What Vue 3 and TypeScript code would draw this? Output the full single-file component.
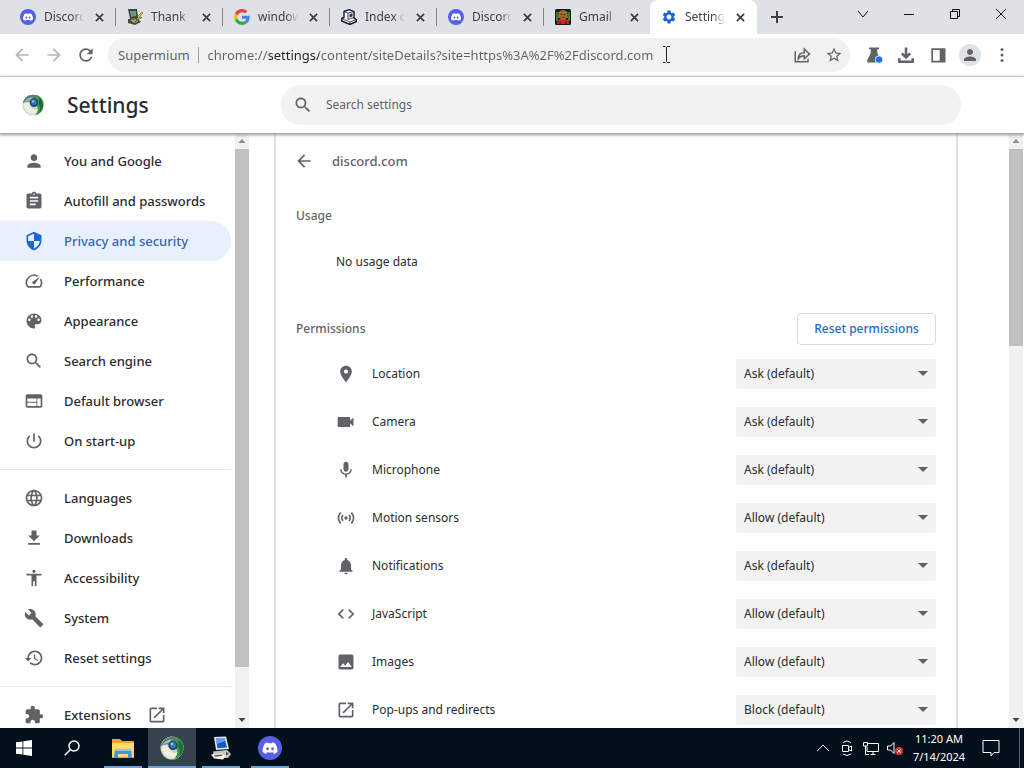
<script setup lang="ts">
import { ref } from 'vue'

interface Tab { art: string; title: string; active?: boolean }
interface NavItem { label: string; icon: string; external?: boolean }
interface Permission { id: string; label: string; icon: string; value: string }

const paths: Record<string, string> = {
  person: 'M12 12c2.21 0 4-1.79 4-4s-1.79-4-4-4-4 1.79-4 4 1.79 4 4 4zm0 2c-2.67 0-8 1.34-8 4v2h16v-2c0-2.66-5.33-4-8-4z',
  clipboard: 'M19 3h-4.18C14.4 1.84 13.3 1 12 1c-1.3 0-2.4.84-2.82 2H5c-1.1 0-2 .9-2 2v14c0 1.1.9 2 2 2h14c1.1 0 2-.9 2-2V5c0-1.1-.9-2-2-2zm-7 0c.55 0 1 .45 1 1s-.45 1-1 1-1-.45-1-1 .45-1 1-1zm2 14H7v-2h7v2zm3-4H7v-2h10v2zm0-4H7V7h10v2z',
  shield: 'M12 1L3 5v6c0 5.55 3.84 10.74 9 12 5.16-1.26 9-6.45 9-12V5l-9-4zm0 10.99h7c-.53 4.12-3.28 7.79-7 8.94V12H5V6.3l7-3.11v8.8z',
  speed: 'M20.38 8.57l-1.23 1.85a8 8 0 0 1-.22 7.58H5.07A8 8 0 0 1 15.58 6.85l1.85-1.23A10 10 0 0 0 3.35 19a2 2 0 0 0 1.72 1h13.85a2 2 0 0 0 1.74-1 10 10 0 0 0-.27-10.44zm-9.79 6.84a2 2 0 0 0 2.83 0l5.66-8.49-8.49 5.66a2 2 0 0 0 0 2.83z',
  palette: 'M12 3c-4.97 0-9 4.03-9 9s4.03 9 9 9c.83 0 1.5-.67 1.5-1.5 0-.39-.15-.74-.39-1.01-.23-.26-.38-.61-.38-.99 0-.83.67-1.5 1.5-1.5H16c2.76 0 5-2.24 5-5 0-4.42-4.03-8-9-8zm-5.5 9c-.83 0-1.5-.67-1.5-1.5S5.67 9 6.5 9 8 9.67 8 10.5 7.33 12 6.5 12zm3-4C8.67 8 8 7.33 8 6.5S8.67 5 9.5 5s1.5.67 1.5 1.5S10.33 8 9.5 8zm5 0c-.83 0-1.5-.67-1.5-1.5S13.67 5 14.5 5s1.5.67 1.5 1.5S15.33 8 14.5 8zm3 4c-.83 0-1.5-.67-1.5-1.5S16.67 9 17.5 9s1.5.67 1.5 1.5-.67 1.5-1.5 1.5z',
  search: 'M15.5 14h-.79l-.28-.27C15.41 12.59 16 11.11 16 9.5 16 5.91 13.09 3 9.5 3S3 5.91 3 9.5 5.91 16 9.5 16c1.61 0 3.09-.59 4.23-1.57l.27.28v.79l5 4.99L20.49 19l-4.99-5zm-6 0C7.01 14 5 11.99 5 9.5S7.01 5 9.5 5 14 7.01 14 9.5 11.99 14 9.5 14z',
  web: 'M20 4H4c-1.1 0-1.99.9-1.99 2L2 18c0 1.1.9 2 2 2h16c1.1 0 2-.9 2-2V6c0-1.1-.9-2-2-2zm-5 14H4v-4h11v4zm0-5H4V9h11v4zm5 5h-4V9h4v9z',
  power: 'M13 3h-2v10h2V3zm4.83 2.17l-1.42 1.42C17.99 7.86 19 9.81 19 12c0 3.87-3.13 7-7 7s-7-3.13-7-7c0-2.19 1.01-4.14 2.58-5.42L6.17 5.17C4.23 6.82 3 9.26 3 12c0 4.97 4.03 9 9 9s9-4.03 9-9c0-2.74-1.23-5.18-3.17-6.83z',
  globe: 'M11.99 2C6.47 2 2 6.48 2 12s4.47 10 9.99 10C17.52 22 22 17.52 22 12S17.52 2 11.99 2zm6.93 6h-2.95c-.32-1.25-.78-2.45-1.38-3.56 1.84.63 3.37 1.91 4.33 3.56zM12 4.04c.83 1.2 1.48 2.53 1.91 3.96h-3.82c.43-1.43 1.08-2.76 1.91-3.96zM4.26 14C4.1 13.36 4 12.69 4 12s.1-1.36.26-2h3.38c-.08.66-.14 1.32-.14 2 0 .68.06 1.34.14 2H4.26zm.82 2h2.95c.32 1.25.78 2.45 1.38 3.56-1.84-.63-3.37-1.9-4.33-3.56zm2.95-8H5.08c.96-1.66 2.49-2.93 4.33-3.56C8.81 5.55 8.35 6.75 8.03 8zM12 19.96c-.83-1.2-1.48-2.53-1.91-3.96h3.82c-.43 1.43-1.08 2.76-1.91 3.96zM14.34 14H9.66c-.09-.66-.16-1.32-.16-2 0-.68.07-1.35.16-2h4.68c.09.65.16 1.32.16 2 0 .68-.07 1.34-.16 2zm.25 5.56c.6-1.11 1.06-2.31 1.38-3.56h2.95c-.96 1.65-2.49 2.93-4.33 3.56zM16.36 14c.08-.66.14-1.32.14-2 0-.68-.06-1.34-.14-2h3.38c.16.64.26 1.31.26 2s-.1 1.36-.26 2h-3.38z',
  download: 'M19 9h-4V3H9v6H5l7 7 7-7zM5 18v2h14v-2H5z',
  accessibility: 'M12 2c1.1 0 2 .9 2 2s-.9 2-2 2-2-.9-2-2 .9-2 2-2zm9 7h-6v13h-2v-6h-2v6H9V9H3V7h18v2z',
  wrench: 'M22.7 19l-9.1-9.1c.9-2.3.4-5-1.5-6.9-2-2-5-2.4-7.4-1.3L9 6 6 9 1.6 4.7C.4 7.1.9 10.1 2.9 12.1c1.9 1.9 4.6 2.4 6.9 1.5l9.1 9.1c.4.4 1 .4 1.4 0l2.3-2.3c.5-.4.5-1.1.1-1.4z',
  history: 'M13 3c-4.97 0-9 4.03-9 9H1l3.89 3.89.07.14L9 12H6c0-3.87 3.13-7 7-7s7 3.13 7 7-3.13 7-7 7c-1.93 0-3.68-.79-4.94-2.06l-1.42 1.42C8.27 19.99 10.51 21 13 21c4.97 0 9-4.03 9-9s-4.03-9-9-9zm-1 5v5l4.28 2.54.72-1.21-3.5-2.08V8H12z',
  puzzle: 'M20.5 11H19V7c0-1.1-.9-2-2-2h-4V3.5C13 2.12 11.88 1 10.5 1S8 2.12 8 3.5V5H4c-1.1 0-1.99.9-1.99 2v3.8H3.5c1.49 0 2.7 1.21 2.7 2.7s-1.21 2.7-2.7 2.7H2V20c0 1.1.9 2 2 2h3.8v-1.5c0-1.49 1.21-2.7 2.7-2.7 1.49 0 2.7 1.21 2.7 2.7V22H17c1.1 0 2-.9 2-2v-4h1.5c1.38 0 2.5-1.12 2.5-2.5S21.88 11 20.5 11z',
  open: 'M19 19H5V5h7V3H5c-1.11 0-2 .9-2 2v14c0 1.1.89 2 2 2h14c1.1 0 2-.9 2-2v-7h-2v7zM14 3v2h3.59l-9.83 9.83 1.41 1.41L19 6.41V10h2V3h-7z',
  place: 'M12 2C8.13 2 5 5.13 5 9c0 5.25 7 13 7 13s7-7.75 7-13c0-3.87-3.13-7-7-7zm0 9.5c-1.38 0-2.5-1.12-2.5-2.5s1.12-2.5 2.5-2.5 2.5 1.12 2.5 2.5-1.12 2.5-2.5 2.5z',
  camera: 'M17 10.5V7c0-.55-.45-1-1-1H3c-.55 0-1 .45-1 1v10c0 .55.45 1 1 1h13c.55 0 1-.45 1-1v-3.5l4 4v-11l-4 4z',
  mic: 'M12 14c1.66 0 2.99-1.34 2.99-3L15 5c0-1.66-1.34-3-3-3S9 3.34 9 5v6c0 1.66 1.34 3 3 3zm5.3-3c0 3-2.54 5.1-5.3 5.1S6.7 14 6.7 11H5c0 3.41 2.72 6.23 6 6.72V21h2v-3.28c3.28-.48 6-3.3 6-6.72h-1.7z',
  sensors: 'M7.76 16.24C6.67 15.16 6 13.66 6 12s.67-3.16 1.76-4.24l1.42 1.42C8.45 9.9 8 10.9 8 12c0 1.1.45 2.1 1.17 2.83l-1.41 1.41zm8.48 0C17.33 15.16 18 13.66 18 12s-.67-3.16-1.76-4.24l-1.42 1.42C15.55 9.9 16 10.9 16 12c0 1.1-.45 2.1-1.17 2.83l1.41 1.41zM12 10c-1.1 0-2 .9-2 2s.9 2 2 2 2-.9 2-2-.9-2-2-2zm8 2c0 2.21-.9 4.21-2.35 5.65l1.42 1.42C20.88 17.26 22 14.76 22 12s-1.12-5.26-2.93-7.07l-1.42 1.42C19.1 7.79 20 9.79 20 12zM6.35 6.35L4.93 4.93C3.12 6.74 2 9.24 2 12s1.12 5.26 2.93 7.07l1.42-1.42C4.9 16.21 4 14.21 4 12s.9-4.21 2.35-5.65z',
  bell: 'M12 22c1.1 0 2-.9 2-2h-4c0 1.1.89 2 2 2zm6-6v-5c0-3.07-1.64-5.64-4.5-6.32V4c0-.83-.67-1.5-1.5-1.5s-1.5.67-1.5 1.5v.68C7.63 5.36 6 7.92 6 11v5l-2 2v1h16v-1l-2-2z',
  code: 'M9.4 16.6L4.8 12l4.6-4.6L8 6l-6 6 6 6 1.4-1.4zm5.2 0l4.6-4.6-4.6-4.6L16 6l6 6-6 6-1.4-1.4z',
  image: 'M21 19V5c0-1.1-.9-2-2-2H5c-1.1 0-2 .9-2 2v14c0 1.1.9 2 2 2h14c1.1 0 2-.9 2-2zM8.5 13.5l2.5 3.01L14.5 12l4.5 6H5l3.5-4.5z',
  back: 'M20 11H7.83l5.59-5.59L12 4l-8 8 8 8 1.41-1.41L7.83 13H20v-2z',
  forward: 'M4 11h12.17l-5.59-5.59L12 4l8 8-8 8-1.41-1.41L16.17 13H4v-2z',
  reload: 'M17.65 6.35C16.2 4.9 14.21 4 12 4c-4.42 0-7.99 3.58-7.99 8s3.57 8 7.99 8c3.73 0 6.84-2.55 7.73-6h-2.08c-.82 2.33-3.04 4-5.65 4-3.31 0-6-2.69-6-6s2.69-6 6-6c1.66 0 3.14.69 4.22 1.78L13 11h7V4l-2.35 2.35z',
  star: 'M22 9.24l-7.19-.62L12 2 9.19 8.63 2 9.24l5.46 4.73L5.82 21 12 17.27 18.18 21l-1.63-7.03L22 9.24zM12 15.4l-3.76 2.27 1-4.28-3.32-2.88 4.38-.38L12 6.1l1.71 4.04 4.38.38-3.32 2.88 1 4.28L12 15.4z',
}

const tabs: Tab[] = [
  { art: 'discord', title: 'Discord' },
  { art: 'pc-bolt', title: 'Thank' },
  { art: 'google', title: 'window' },
  { art: 'iso-pc', title: 'Index o' },
  { art: 'discord', title: 'Discord' },
  { art: 'portrait', title: 'Gmail' },
  { art: 'gear', title: 'Setting', active: true },
]

const navGroups: NavItem[][] = [
  [
    { label: 'You and Google', icon: 'person' },
    { label: 'Autofill and passwords', icon: 'clipboard' },
    { label: 'Privacy and security', icon: 'shield' },
    { label: 'Performance', icon: 'speed' },
    { label: 'Appearance', icon: 'palette' },
    { label: 'Search engine', icon: 'search' },
    { label: 'Default browser', icon: 'web' },
    { label: 'On start-up', icon: 'power' },
  ],
  [
    { label: 'Languages', icon: 'globe' },
    { label: 'Downloads', icon: 'download' },
    { label: 'Accessibility', icon: 'accessibility' },
    { label: 'System', icon: 'wrench' },
    { label: 'Reset settings', icon: 'history' },
  ],
  [{ label: 'Extensions', icon: 'puzzle', external: true }],
]
const selected = ref('Privacy and security')

const permissions = ref<Permission[]>([
  { id: 'location', label: 'Location', icon: 'place', value: 'Ask (default)' },
  { id: 'camera', label: 'Camera', icon: 'camera', value: 'Ask (default)' },
  { id: 'microphone', label: 'Microphone', icon: 'mic', value: 'Ask (default)' },
  { id: 'motion', label: 'Motion sensors', icon: 'sensors', value: 'Allow (default)' },
  { id: 'notifications', label: 'Notifications', icon: 'bell', value: 'Ask (default)' },
  { id: 'javascript', label: 'JavaScript', icon: 'code', value: 'Allow (default)' },
  { id: 'images', label: 'Images', icon: 'image', value: 'Allow (default)' },
  { id: 'popups', label: 'Pop-ups and redirects', icon: 'open', value: 'Block (default)' },
])

const url = ref('chrome://settings/content/siteDetails?site=https%3A%2F%2Fdiscord.com')
const query = ref('')

const taskApps = [
  { art: 'explorer', name: 'File Explorer', active: false },
  { art: 'swirl', name: 'Supermium', active: true },
  { art: 'xp-pc', name: 'Remote computer', active: false },
  { art: 'discord', name: 'Discord', active: false },
]
</script>

<template>
  <div class="desktop">
    <svg class="sprite" aria-hidden="true">
      <symbol id="discord" viewBox="0 0 24 24">
        <circle cx="12" cy="12" r="12" fill="#5560e6" />
        <path transform="translate(4.6 4.7) scale(.62)" fill="#fff" d="M20.317 4.37a19.8 19.8 0 0 0-4.885-1.515.074.074 0 0 0-.079.037c-.21.375-.444.865-.608 1.25-1.845-.277-3.68-.277-5.487 0-.163-.394-.405-.875-.617-1.25a.077.077 0 0 0-.079-.037A19.7 19.7 0 0 0 3.677 4.37a.07.07 0 0 0-.032.027C.533 9.046-.319 13.58.099 18.058a.082.082 0 0 0 .031.056c2.053 1.508 4.041 2.423 5.993 3.03a.078.078 0 0 0 .084-.028c.462-.63.873-1.295 1.226-1.994a.076.076 0 0 0-.041-.106c-.653-.248-1.275-.55-1.873-.892a.077.077 0 0 1-.007-.128c.126-.094.252-.192.372-.291a.074.074 0 0 1 .077-.01c3.928 1.793 8.18 1.793 12.062 0a.074.074 0 0 1 .078.009c.12.099.246.198.373.292a.077.077 0 0 1-.007.128 12.3 12.3 0 0 1-1.873.891.077.077 0 0 0-.041.107c.36.698.772 1.363 1.225 1.993a.076.076 0 0 0 .084.029c1.961-.607 3.95-1.522 6.002-3.03a.077.077 0 0 0 .032-.055c.5-5.177-.838-9.674-3.549-13.66a.061.061 0 0 0-.031-.029zM8.02 15.331c-1.183 0-2.157-1.086-2.157-2.419s.956-2.419 2.157-2.419c1.211 0 2.176 1.095 2.157 2.419 0 1.333-.956 2.419-2.157 2.419zm7.975 0c-1.183 0-2.157-1.086-2.157-2.419s.955-2.419 2.157-2.419c1.211 0 2.176 1.095 2.157 2.419 0 1.333-.946 2.419-2.157 2.419z" />
      </symbol>
      <symbol id="google" viewBox="0 0 48 48">
        <path fill="#ea4335" d="M24 9.5c3.54 0 6.71 1.22 9.21 3.6l6.85-6.85C35.9 2.38 30.47 0 24 0 14.62 0 6.51 5.38 2.56 13.22l7.98 6.19C12.43 13.72 17.74 9.5 24 9.5z" />
        <path fill="#4285f4" d="M46.98 24.55c0-1.57-.15-3.09-.38-4.55H24v9.02h12.94c-.58 2.96-2.26 5.48-4.78 7.18l7.73 6c4.51-4.18 7.09-10.36 7.09-17.65z" />
        <path fill="#fbbc05" d="M10.53 28.59c-.48-1.45-.76-2.99-.76-4.59s.27-3.14.76-4.59l-7.98-6.19C.92 16.46 0 20.12 0 24c0 3.88.92 7.54 2.56 10.78l7.97-6.19z" />
        <path fill="#34a853" d="M24 48c6.48 0 11.93-2.13 15.89-5.81l-7.73-6c-2.15 1.45-4.92 2.3-8.16 2.3-6.26 0-11.57-4.22-13.47-9.91l-7.98 6.19C6.51 42.62 14.62 48 24 48z" />
      </symbol>
      <symbol id="gear" viewBox="0 0 24 24">
        <path fill="#1967d2" d="M19.14 12.94c.04-.3.06-.61.06-.94 0-.32-.02-.64-.07-.94l2.03-1.58c.18-.14.23-.41.12-.61l-1.92-3.32c-.12-.22-.37-.29-.59-.22l-2.39.96c-.5-.38-1.03-.7-1.62-.94l-.36-2.54c-.04-.24-.24-.41-.48-.41h-3.84c-.24 0-.43.17-.47.41l-.36 2.54c-.59.24-1.13.57-1.62.94l-2.39-.96c-.22-.08-.47 0-.59.22L2.74 8.87c-.12.21-.08.47.12.61l2.03 1.58c-.05.3-.09.63-.09.94s.02.64.07.94l-2.03 1.58c-.18.14-.23.41-.12.61l1.92 3.32c.12.22.37.29.59.22l2.39-.96c.5.38 1.03.7 1.62.94l.36 2.54c.05.24.24.41.48.41h3.84c.24 0 .44-.17.47-.41l.36-2.54c.59-.24 1.13-.56 1.62-.94l2.39.96c.22.08.47 0 .59-.22l1.92-3.32c.12-.22.07-.47-.12-.61l-2.01-1.58zM12 15.6c-1.98 0-3.6-1.62-3.6-3.6s1.62-3.6 3.6-3.6 3.6 1.62 3.6 3.6-1.62 3.6-3.6 3.6z" />
      </symbol>
      <symbol id="pc-bolt" viewBox="0 0 16 16">
        <path fill="#3c4238" d="M1 0h9l1 9-8 1z" />
        <path fill="#6f9a86" d="M3 2h6v5l-5 1z" />
        <path fill="#4a4a30" d="M1 10l9-1 4 4-6 3-7-2z" />
        <path fill="#a8a070" d="M3 11l6-1 2 3-4 1z" />
        <path fill="#e8d84a" stroke="#54501c" stroke-width=".6" d="M15 3l-5 5 2.500.5L8 13l7-4.500-2.500-.6L15.800 4z" />
      </symbol>
      <symbol id="iso-pc" viewBox="0 0 16 16">
        <path fill="#fff" stroke="#14142c" stroke-width="1.400" stroke-linejoin="round" d="M3 2.500L8 .7l5 2v6.500l2.300 1.300v2L9 15.500.7 12V9.500L3 8.500z" />
        <path fill="none" stroke="#14142c" stroke-width=".8" d="M3 2.500l4 1.700v6.300l6-2M7 4.200l6-1.500M.7 9.500L9 13l6.300-2.500M9 13v2.500" />
        <path fill="#2b2b8c" d="M8.500 5.200l3-.9V7.500l-3 1z" />
      </symbol>
      <symbol id="portrait" viewBox="0 0 16 16">
        <rect width="16" height="16" rx="1.500" fill="#1a1a12" />
        <path fill="#1f8d2c" d="M1 3h2v9H1zM13 3h2v9h-2z" />
        <path fill="#a06a28" d="M3.500 3q4.500-4 9 0l.5 6h-2l-1 2.500H6L5 9H3z" />
        <path fill="#5d2f14" d="M5.500 5h2v1h-2zM8.500 5h2v1h-2zM6.500 8.300h3v.8h-3z" />
        <path fill="#d3202c" d="M2 15q0-5 4-5l2 1.500L10 10q4 0 4 5z" />
        <path fill="#3b1010" d="M4.500 12.500h1V15h-1zM10.500 12.500h1V15h-1z" />
      </symbol>
      <symbol id="swirl" viewBox="0 0 24 24">
        <circle cx="12" cy="12" r="11.500" fill="#cfd3c0" />
        <path fill="#557f76" d="M.8 10C2.500 3 9-1 17 1.500L21 5l-6 6Q7 6 .8 10z" />
        <path fill="#a3bdb4" d="M2 9Q6 3.500 12 3.500L9 7Q5 7 2 9z" />
        <path fill="#36994a" d="M16 1.200Q23.500 4 23.500 12 23 21 14.500 23.300 19 17 16 12z" />
        <path fill="#1f7030" d="M18.500 3.500q5 4 4.500 10-1 5-4 7 1.500-6-.5-10z" />
        <path fill="#eeeee0" d="M1.500 11q5-4 8 2t8 3Q16 21 12 22.500 3 22 1.500 11z" />
        <circle cx="13" cy="9.500" r="4.600" fill="#1f4777" />
        <circle cx="13" cy="9" r="3" fill="#3b79b5" />
        <circle cx="12" cy="8" r="1.200" fill="#a9cbe8" />
      </symbol>
      <symbol id="explorer" viewBox="0 0 24 24">
        <path fill="#e9a820" d="M1 3h8l2 2h12v17H1z" />
        <path fill="#fddb6d" d="M1 7h22v14H1z" />
        <path fill="#3f97d6" d="M4 13h16l1 9h-4v-4H7v4H3z" />
        <path fill="#8cc7ee" d="M4 13h16v2H4z" />
      </symbol>
      <symbol id="xp-pc" viewBox="0 0 24 24">
        <path fill="#e9e8dc" d="M5 1l12-.5L20 13 7 14z" />
        <path fill="#1457c8" d="M7 2.500l8.500-.4L18 11.500l-9.500.7z" />
        <path fill="#62a4f2" d="M7 2.500l8.500-.4.7 3L7.600 8z" />
        <path fill="#c9c8bc" d="M4 15.500l14-1.500 4 4-3 4-14-1z" />
        <path fill="#f7f6ee" d="M2 18.500l10-1 5 2.500-3 3.500-9-1z" />
        <path fill="#55554e" d="M5 19.300l7-.7 2 1.200-8 .9zM17 15.500l3 2.500-3 1.500z" />
      </symbol>
    </svg>

    <header class="tabstrip">
      <nav class="tabs" aria-label="Tabs">
        <div v-for="(tab, i) in tabs" :key="i" class="tab" :class="{ active: tab.active }">
          <svg class="favicon"><use :href="'#' + tab.art" /></svg>
          <span class="tab-title">{{ tab.title }}</span>
          <button class="tab-close" aria-label="Close tab">
            <svg viewBox="0 0 10 10"><path d="M1 1l8 8M9 1l-8 8" /></svg>
          </button>
        </div>
      </nav>
      <button class="new-tab" aria-label="New tab">
        <svg viewBox="0 0 12 12"><path d="M6 0v12M0 6h12" /></svg>
      </button>
      <div class="window-controls">
        <button aria-label="Search tabs"><svg viewBox="0 0 12 12"><path d="M1 3l5 6 5-6" /></svg></button>
        <button aria-label="Minimise"><svg viewBox="0 0 12 12"><path d="M1 6.500h10" /></svg></button>
        <button aria-label="Restore"><svg viewBox="0 0 12 12"><path d="M1.500 3.500h7v7h-7zM3.500 3.500v-2h7v7h-2" /></svg></button>
        <button aria-label="Close"><svg viewBox="0 0 12 12"><path d="M1 1l10 10M11 1L1 11" /></svg></button>
      </div>
    </header>

    <div class="toolbar">
      <button class="tool dim" aria-label="Back"><svg viewBox="0 0 24 24"><path :d="paths.back" /></svg></button>
      <button class="tool dim" aria-label="Forward"><svg viewBox="0 0 24 24"><path :d="paths.forward" /></svg></button>
      <button class="tool" aria-label="Reload"><svg viewBox="0 0 24 24"><path :d="paths.reload" /></svg></button>
      <div class="omnibox">
        <span class="brand">Supermium</span>
        <input v-model="url" class="url" aria-label="Address" spellcheck="false" />
        <svg class="ibeam" viewBox="0 0 9 17" aria-hidden="true"><path d="M1 .5h2.500l1 1 1-1H8M4.500 1.500v14M1 16.500h2.500l1-1 1 1H8" /></svg>
        <button class="tool" aria-label="Share">
          <svg viewBox="0 0 24 24" class="line"><path d="M3 7v14h17v-4M7 17c0-6 4-8 8-8V4l7 6.500-7 6.500v-4c-4 0-6 1-8 4z" /></svg>
        </button>
        <button class="tool" aria-label="Bookmark"><svg viewBox="0 0 24 24"><path :d="paths.star" /></svg></button>
      </div>
      <button class="tool" aria-label="Experiments">
        <svg viewBox="0 0 24 24"><path d="M6 3h12v2h-2v5l4 8q1 3-1 3H5q-2 0-1-3l4-8V5H6z" /><circle cx="18" cy="17.500" r="4.500" fill="#1a73e8" stroke="#fff" /></svg>
      </button>
      <button class="tool" aria-label="Downloads">
        <svg viewBox="0 0 24 24" class="line heavy"><path d="M12 3v12M7 10l5 5 5-5M4 16v4h16v-4" /></svg>
      </button>
      <button class="tool" aria-label="Side panel">
        <svg viewBox="0 0 24 24"><path fill-rule="evenodd" d="M4 4h17v17H4zM6 6v13h8V6z" /></svg>
      </button>
      <button class="tool avatar" aria-label="Profile"><svg viewBox="0 0 24 24"><path :d="paths.person" /></svg></button>
      <button class="tool" aria-label="Menu">
        <svg viewBox="0 0 24 24"><circle cx="12" cy="5.500" r="1.800" /><circle cx="12" cy="12" r="1.800" /><circle cx="12" cy="18.500" r="1.800" /></svg>
      </button>
    </div>

    <div class="settings-head">
      <svg class="logo"><use href="#swirl" /></svg>
      <h1>Settings</h1>
      <label class="search">
        <svg viewBox="0 0 24 24"><path :d="paths.search" /></svg>
        <input v-model="query" type="search" placeholder="Search settings" aria-label="Search settings" />
      </label>
    </div>

    <div class="body">
      <nav class="sidebar" aria-label="Settings">
        <ul v-for="(group, g) in navGroups" :key="g">
          <li v-for="item in group" :key="item.label">
            <a href="#" :class="{ selected: item.label === selected }" @click.prevent="selected = item.label">
              <svg viewBox="0 0 24 24"><path :d="paths[item.icon]" /></svg>
              <span>{{ item.label }}</span>
              <svg v-if="item.external" viewBox="0 0 24 24" class="external"><path :d="paths.open" /></svg>
            </a>
          </li>
        </ul>
      </nav>
      <div class="scrollbar" aria-hidden="true">
        <svg viewBox="0 0 14 16"><path class="faint" d="M3.500 10L7 6l3.500 4z" /></svg>
        <div class="track"><div class="thumb thumb-nav"></div></div>
        <svg viewBox="0 0 14 16"><path d="M3.500 6L7 10l3.500-4z" /></svg>
      </div>

      <main class="card">
        <div class="page-title">
          <button aria-label="Back to site settings"><svg viewBox="0 0 24 24"><path :d="paths.back" /></svg></button>
          <h2>discord.com</h2>
        </div>
        <h3 class="section">Usage</h3>
        <p class="usage">No usage data</p>
        <div class="section with-action">
          <h3>Permissions</h3>
          <button class="reset">Reset permissions</button>
        </div>
        <div v-for="p in permissions" :key="p.id" class="permission">
          <svg viewBox="0 0 24 24"><path :d="paths[p.icon]" /></svg>
          <label :for="p.id">{{ p.label }}</label>
          <div class="select">
            <select :id="p.id" v-model="p.value">
              <option :value="p.value">{{ p.value }}</option>
            </select>
            <svg viewBox="0 0 10 5" aria-hidden="true"><path d="M0 0h10L5 5z" /></svg>
          </div>
        </div>
      </main>
      <div class="scrollbar" aria-hidden="true">
        <svg viewBox="0 0 14 16"><path class="faint" d="M3.500 10L7 6l3.500 4z" /></svg>
        <div class="track"><div class="thumb thumb-page"></div></div>
        <svg viewBox="0 0 14 16"><path d="M3.500 6L7 10l3.500-4z" /></svg>
      </div>
    </div>

    <footer class="taskbar">
      <button class="task" aria-label="Start">
        <svg viewBox="0 0 16 16" class="start"><path d="M0 2.300l6.500-.9v6.100H0zM7.300 1.300L16 0v7.500H7.300zM0 8.400h6.500v6.200L0 13.700zM7.300 8.400H16V16l-8.700-1.200z" /></svg>
      </button>
      <button class="task find" aria-label="Search">
        <svg viewBox="0 0 16 16"><circle cx="10" cy="6" r="5" /><path d="M6.300 9.700L.8 15.200" /></svg>
      </button>
      <button v-for="app in taskApps" :key="app.name" class="task app" :class="{ active: app.active }" :aria-label="app.name">
        <svg><use :href="'#' + app.art" /></svg>
      </button>
      <div class="tray">
        <button aria-label="Hidden icons"><svg viewBox="0 0 16 16"><path d="M2 11l6-6 6 6" /></svg></button>
        <button aria-label="Meet now"><svg viewBox="0 0 16 16"><path d="M3.500 5.500h6v6h-6zM9.500 7.500l3-1.500v5l-3-1.500M4 3q4-4 8 0M4 14q4 3 8 0" /></svg></button>
        <button aria-label="Network"><svg viewBox="0 0 16 16"><path d="M5 3.500h10.500v8H4V7M7.500 14.500h5M10 11.500v3M.5 2.500h4V6h-4zM2.500 6v8.500H6" /></svg></button>
        <button aria-label="Volume muted">
          <svg viewBox="0 0 16 16"><path d="M.5 6h3L7 2.500v11L3.500 10h-3z" /><circle cx="12" cy="11" r="4" class="alert" /><path d="M10.300 9.300l3.400 3.400M13.700 9.300l-3.400 3.400" /></svg>
        </button>
      </div>
      <time class="clock" datetime="2024-07-14T11:20"><span>11:20 AM</span><span>7/14/2024</span></time>
      <button class="task notes" aria-label="Notifications">
        <svg viewBox="0 0 18 18"><path d="M1 1.500h16v12h-5L9 17v-3.500H1z" /></svg>
      </button>
      <div class="peek"></div>
    </footer>
  </div>
</template>

<style>
body {
  margin: 0;
}
</style>

<style scoped>
.desktop {
  display: flex;
  flex-direction: column;
  height: 100vh;
  overflow: hidden;
  background: #fff;
  color: #2b2c2f;
  font: 12px/20px "Noto Sans", "Open Sans", sans-serif;
}
.sprite {
  position: absolute;
  width: 0;
  height: 0;
}
button {
  display: flex;
  align-items: center;
  justify-content: center;
  flex: none;
  padding: 0;
  border: 0;
  background: none;
  font: inherit;
  color: inherit;
}
input {
  min-width: 0;
  padding: 0;
  border: 0;
  outline: 0;
  background: none;
  font: inherit;
}
h1, h2, h3, p, ul {
  margin: 0;
  padding: 0;
  list-style: none;
}
svg {
  display: block;
  flex: none;
  fill: #5f6368;
}

/* Tab strip */
.tabstrip {
  display: flex;
  flex: none;
  height: 34px;
  background: #dee1e6;
}
.tabs {
  display: flex;
  padding-left: 8px;
}
.tab {
  position: relative;
  display: flex;
  align-items: center;
  box-sizing: border-box;
  width: 107px;
  padding: 0 8px 0 12px;
  color: #3c4043;
}
.tab:not(.active)::after {
  content: "";
  position: absolute;
  right: -1px;
  top: 8px;
  width: 1px;
  height: 18px;
  background: #85888d;
}
.tab:nth-last-child(2)::after {
  display: none;
}
.tab.active {
  padding-left: 11px;
  padding-right: 9px;
  background: #fff;
  border-radius: 8px 8px 0 0;
}
.favicon {
  width: 16px;
  height: 16px;
}
.tab-title {
  flex: 1;
  margin-left: 8px;
  white-space: nowrap;
  mask-image: linear-gradient(90deg, #000 60%, transparent 85%);
}
.tab-close {
  width: 16px;
  height: 16px;
}
.tab-close svg {
  width: 9px;
  height: 9px;
  stroke: #3c4043;
  stroke-width: 2;
}
.new-tab {
  width: 28px;
  margin-left: 6px;
}
.new-tab svg {
  width: 12px;
  height: 12px;
  stroke: #3c4043;
  stroke-width: 2;
}
.window-controls {
  display: flex;
  margin-left: auto;
}
.window-controls button {
  width: 46px;
  height: 28px;
}
.window-controls svg {
  width: 12px;
  height: 12px;
  fill: none;
  stroke: #111;
}

/* Toolbar */
.toolbar {
  display: flex;
  align-items: center;
  flex: none;
  height: 42px;
  padding: 0 6px;
  border-bottom: 1px solid #e2e4e6;
}
.tool {
  width: 32px;
  height: 32px;
}
.tool svg {
  width: 20px;
  height: 20px;
  fill: #5f6368;
}
.tool.dim svg {
  fill: #b4b6b9;
}
.tool svg.line {
  fill: none;
  stroke: #5f6368;
  stroke-width: 2;
}
.tool svg.heavy {
  stroke-width: 3;
}
.tool.avatar svg {
  width: 18px;
  height: 18px;
  padding: 2px;
  border-radius: 50%;
  background: #dee1e6;
}
.omnibox {
  position: relative;
  display: flex;
  align-items: center;
  flex: 1;
  height: 34px;
  margin: 0 8px 0 6px;
  padding-left: 10px;
  border-radius: 17px;
  background: #f1f1f1;
  font-size: 13px;
  color: #5f6368;
}
.omnibox .tool svg {
  width: 18px;
  height: 18px;
}
.brand {
  padding-right: 8px;
  margin-right: 9px;
  border-right: 1px solid #9aa0a6;
  line-height: 16px;
}
.url {
  flex: 1;
  height: 24px;
  background: linear-gradient(90deg, #5f6368 61px, #202124 61px 111px, #5f6368 111px);
  background-clip: text;
  color: transparent;
}
.ibeam {
  position: absolute;
  left: 554px;
  top: 8px;
  width: 9px;
  height: 17px;
  fill: none;
  stroke: #222;
}

/* Settings header */
.settings-head {
  position: relative;
  z-index: 1;
  display: flex;
  align-items: center;
  flex: none;
  height: 56px;
  padding: 0 63px 0 22px;
  background: #fff;
  box-shadow: 0 1px 3px 1px #9a9a9a;
}
.logo {
  width: 22px;
  height: 22px;
}
h1 {
  width: 214px;
  margin-left: 23px;
  font-size: 21px;
  line-height: 28px;
  font-weight: 500;
}
.search {
  display: flex;
  align-items: center;
  flex: 1;
  height: 40px;
  padding-left: 12px;
  border-radius: 20px;
  background: #f2f2f2;
}
.search svg {
  width: 20px;
  height: 20px;
}
.search input {
  flex: 1;
  margin-left: 13px;
}
.search input::placeholder {
  color: #5f6368;
  opacity: 1;
}

/* Body */
.body {
  display: flex;
  flex: 1;
  min-height: 0;
  padding-right: 1px;
}
.sidebar {
  width: 235px;
  flex: none;
  padding-top: 8px;
  box-sizing: border-box;
  overflow: hidden;
}
.sidebar ul + ul {
  margin-top: 8px;
  padding-top: 8px;
  border-top: 1px solid #e8e8ea;
}
.sidebar ul {
  margin-right: 4px;
}
.sidebar a {
  display: flex;
  align-items: center;
  height: 40px;
  padding-left: 24px;
  border-radius: 0 20px 20px 0;
  color: #2b2c2f;
  font-size: 13px;
  font-weight: 500;
  text-decoration: none;
}
.sidebar svg {
  width: 20px;
  height: 20px;
}
.sidebar span {
  margin-left: 20px;
}
.sidebar .external {
  margin-left: 16px;
}
.sidebar a.selected {
  background: #e8f0fe;
  color: #3367b5;
}
.sidebar a.selected svg {
  fill: #1967d2;
}
.scrollbar {
  display: flex;
  flex-direction: column;
  flex: none;
  width: 14px;
  background: #f1f1f1;
}
.scrollbar svg {
  width: 14px;
  height: 16px;
  fill: #404040;
}
.scrollbar .faint {
  fill: #8a8a8a;
}
.track {
  flex: 1;
}
.thumb {
  background: #c1c1c1;
}
.thumb-nav {
  height: 92%;
}
.thumb-page {
  height: 35%;
}
.card {
  flex: 1;
  min-width: 0;
  box-sizing: border-box;
  margin: 0 51px 0 25px;
  padding: 8px 20px 0;
  overflow: hidden;
  border: solid #e2e2e2;
  border-width: 0 2px;
}
.page-title {
  display: flex;
  align-items: center;
  height: 40px;
}
.page-title button {
  width: 16px;
  height: 20px;
}
.page-title svg {
  width: 20px;
  height: 20px;
}
h2 {
  margin-left: 20px;
  font-size: 13px;
  font-weight: 500;
  color: #5f6368;
}
h3 {
  font-size: 12px;
  font-weight: 500;
  color: #5f6368;
}
.section {
  margin-top: 25px;
}
.usage {
  margin: 26px 0 0 40px;
}
.section.with-action {
  display: flex;
  align-items: center;
  justify-content: space-between;
  margin-top: 41px;
  margin-bottom: 5px;
}
.reset {
  width: 139px;
  height: 32px;
  border: 1px solid #dadce0;
  border-radius: 4px;
  color: #1a6bc8;
  font-weight: 500;
}
.permission {
  display: flex;
  align-items: center;
  height: 48px;
  padding-left: 40px;
}
.permission > svg {
  width: 20px;
  height: 20px;
}
.permission label {
  flex: 1;
  margin-left: 16px;
}
.select {
  position: relative;
  width: 200px;
}
select {
  display: block;
  width: 100%;
  height: 30px;
  padding: 0 8px;
  appearance: none;
  border: 0;
  border-radius: 2px;
  background: #f2f2f2;
  color: #2b2c2f;
  font: inherit;
}
.select svg {
  position: absolute;
  right: 8px;
  top: 12px;
  width: 10px;
  height: 5px;
  pointer-events: none;
}

/* Taskbar */
.taskbar {
  display: flex;
  flex: none;
  height: 40px;
  background: #02101b;
  color: #fff;
}
.task {
  width: 48px;
  height: 40px;
}
.task svg {
  width: 16px;
  height: 16px;
  fill: #fff;
}
.find svg {
  fill: none;
  stroke: #fff;
  stroke-width: 1.5;
}
.find {
  margin-right: 2px;
}
.app {
  position: relative;
  margin-left: 1px;
}
.app svg {
  width: 24px;
  height: 24px;
}
.app::after {
  content: "";
  position: absolute;
  left: 5px;
  right: 5px;
  bottom: 0;
  height: 2px;
  background: #6ba3dc;
}
.app.active {
  background: #35444d;
}
.app.active::after {
  left: 0;
  right: 0;
}
.tray {
  display: flex;
  margin-left: auto;
}
.tray button {
  width: 24px;
}
.tray svg {
  width: 16px;
  height: 16px;
  fill: none;
  stroke: #fff;
}
.tray .alert {
  fill: #d8343f;
  stroke: none;
}
.clock {
  display: flex;
  flex-direction: column;
  align-items: center;
  justify-content: center;
  width: 64px;
  font-size: 11px;
  line-height: 18px;
}
.notes {
  width: 40px;
}
.notes svg {
  width: 18px;
  height: 18px;
  fill: none;
  stroke: #fff;
}
.peek {
  width: 4px;
  margin-left: 8px;
  border-left: 1px solid #5b6670;
}
</style>
